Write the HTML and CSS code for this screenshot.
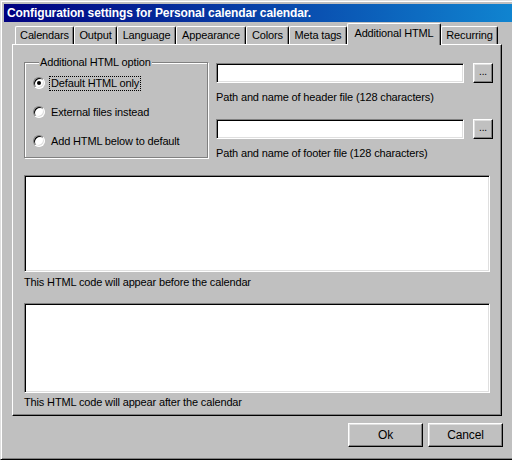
FILE: index.html
```html
<!DOCTYPE html>
<html>
<head>
<meta charset="utf-8">
<link rel="stylesheet" href="styles.css">
</head>
<body>
<div class="window">
  <div class="titlebar">Configuration settings for Personal calendar calendar.</div>
  <div class="tabs">
    <div class="tab w-cal">Calendars</div>
    <div class="tab w-out">Output</div>
    <div class="tab w-lang">Language</div>
    <div class="tab w-app">Appearance</div>
    <div class="tab w-col">Colors</div>
    <div class="tab w-meta">Meta tags</div>
    <div class="tab active w-add">Additional HTML</div>
    <div class="tab w-rec">Recurring</div>
  </div>
  <div class="panel">
    <div class="top-row">
      <fieldset class="group">
        <legend>Additional HTML option</legend>
        <div class="opt"><span class="radio checked"></span><span class="lbl focus">Default HTML only</span></div>
        <div class="opt"><span class="radio"></span><span class="lbl">External files instead</span></div>
        <div class="opt"><span class="radio"></span><span class="lbl">Add HTML below to default</span></div>
      </fieldset>
      <div class="files">
        <div class="file-row"><div class="input"></div><div class="btn browse">...</div></div>
        <div class="hint">Path and name of header file (128 characters)</div>
        <div class="file-row second"><div class="input"></div><div class="btn browse">...</div></div>
        <div class="hint">Path and name of footer file (128 characters)</div>
      </div>
    </div>
    <div class="textarea ta-before"></div>
    <div class="hint hint-ta">This HTML code will appear before the calendar</div>
    <div class="textarea ta-after"></div>
    <div class="hint hint-ta2">This HTML code will appear after the calendar</div>
  </div>
  <div class="buttons">
    <div class="btn push">Ok</div>
    <div class="btn push">Cancel</div>
  </div>
</div>
</body>
</html>
```
FILE: styles.css
```css
html, body {
  margin: 0;
  padding: 0;
  background: #c0c0c0;
  overflow: hidden;
}
body {
  width: 512px;
  height: 460px;
  font-family: "Liberation Sans", Arial, sans-serif;
  font-size: 11px;
  letter-spacing: -0.15px;
  color: #000;
}
.window {
  box-sizing: border-box;
  width: 516px;
  height: 460px;
  background: #c0c0c0;
  border: 1px solid;
  border-color: #dfdfdf #000 #000 #dfdfdf;
  box-shadow: inset 1px 1px #fff, inset -1px -1px #808080;
  padding: 3px 3px 0 3px;
  display: flex;
  flex-direction: column;
}
.titlebar {
  height: 18px;
  line-height: 18px;
  background: linear-gradient(to right, #000080, #1084d0);
  color: #fff;
  font-weight: bold;
  font-size: 12px;
  letter-spacing: -0.1px;
  padding-left: 3px;
  white-space: nowrap;
  overflow: hidden;
}
.tabs {
  display: flex;
  align-items: flex-end;
  height: 21px;
  margin-top: 1px;
  margin-left: 8px;
  padding-left: 3px;
  position: relative;
  z-index: 2;
}
.tab {
  box-sizing: border-box;
  height: 18px;
  padding-top: 2px;
  line-height: 13px;
  text-align: center;
  white-space: nowrap;
  background: #c0c0c0;
  border-top: 1px solid #fff;
  border-left: 1px solid #fff;
  border-right: 1px solid #000;
  border-radius: 2px 2px 0 0;
  box-shadow: inset -1px 0 #808080;
}
.tab.active {
  height: 22px;
  padding-top: 3px;
  margin-bottom: -1px;
}
.w-cal { width: 59px; }
.w-out { width: 43px; }
.w-lang { width: 59px; }
.w-app { width: 70px; }
.w-col { width: 43px; }
.w-meta { width: 58px; }
.w-add { width: 94px; }
.w-rec { width: 57px; }

.panel {
  box-sizing: border-box;
  height: 372px;
  margin-left: 8px;
  margin-right: 10px;
  border: 1px solid;
  border-color: #fff #000 #000 #fff;
  box-shadow: inset -1px -1px #808080;
  padding: 11px 0 0 11px;
  display: flex;
  flex-direction: column;
  align-items: flex-start;
}
.top-row {
  display: flex;
  align-items: flex-start;
}
.group {
  box-sizing: border-box;
  width: 184px;
  margin: 0;
  padding: 7px 0 9px 8px;
  border: 1px solid #808080;
  box-shadow: inset 1px 1px #fff, 1px 1px #fff;
  display: flex;
  flex-direction: column;
  gap: 15px;
}
.group legend {
  margin-left: 6px;
  padding: 0 1px;
  line-height: 13px;
  background: #c0c0c0;
}
.opt {
  display: flex;
  align-items: center;
  height: 14px;
}
.radio {
  box-sizing: border-box;
  width: 12px;
  height: 12px;
  border-radius: 50%;
  background: #fff;
  border: 1px solid;
  border-color: #808080 #fff #fff #808080;
  box-shadow: inset 1px 1px #000, inset -1px -1px #dfdfdf;
  display: flex;
  align-items: center;
  justify-content: center;
  flex: none;
}
.radio.checked::after {
  content: "";
  width: 4px;
  height: 4px;
  border-radius: 50%;
  background: #000;
}
.lbl {
  margin-left: 4px;
  padding: 0 1px;
  line-height: 13px;
  border: 1px dotted transparent;
  white-space: nowrap;
}
.lbl.focus {
  border-color: #000;
}
.files {
  margin-left: 8px;
  margin-top: 7px;
  display: flex;
  flex-direction: column;
}
.file-row {
  display: flex;
  align-items: flex-start;
}
.file-row.second {
  margin-top: 15px;
}
.input {
  box-sizing: border-box;
  width: 248px;
  height: 20px;
  background: #fff;
  border: 1px solid;
  border-color: #808080 #fff #fff #808080;
  box-shadow: inset 1px 1px #000, inset -1px -1px #dfdfdf;
}
.btn {
  box-sizing: border-box;
  background: #c0c0c0;
  border: 1px solid;
  border-color: #fff #000 #000 #fff;
  box-shadow: inset -1px -1px #808080, inset 1px 1px #dfdfdf;
  text-align: center;
}
.browse {
  width: 20px;
  height: 20px;
  margin-left: 9px;
  line-height: 16px;
  font-size: 10px;
}
.hint {
  margin-top: 8px;
  line-height: 13px;
  white-space: nowrap;
}
.textarea {
  box-sizing: border-box;
  width: 466px;
  background: #fff;
  border: 1px solid;
  border-color: #808080 #fff #fff #808080;
  box-shadow: inset 1px 1px #000, inset -1px -1px #dfdfdf;
}
.ta-before {
  margin-top: 15px;
  height: 97px;
}
.hint-ta { margin-top: 4px; }
.ta-after {
  margin-top: 14px;
  height: 90px;
}
.hint-ta2 { margin-top: 3px; }
.buttons {
  display: flex;
  justify-content: flex-end;
  gap: 5px;
  margin-top: 7px;
  margin-right: 9px;
}
.push {
  width: 75px;
  height: 24px;
  line-height: 22px;
  font-size: 12px;
}
```
